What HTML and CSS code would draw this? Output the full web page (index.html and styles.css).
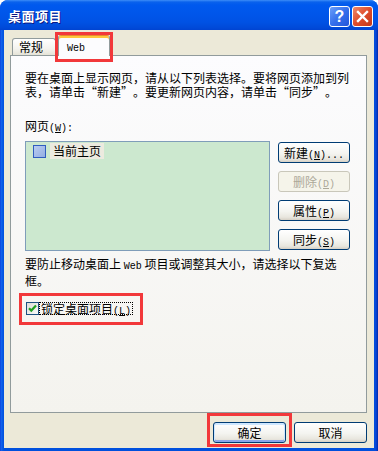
FILE: index.html
```html
<!DOCTYPE html>
<html lang="zh-CN">
<head>
<meta charset="utf-8">
<title>桌面项目</title>
<link rel="stylesheet" href="styles.css">
</head>
<body>
<div class="window">
  <div class="titlebar">
    <span class="title">桌面项目</span>
    <div class="tb-buttons">
      <span class="tb-btn help">?</span>
      <span class="tb-btn close"><svg width="19" height="19" viewBox="0 0 19 19"><path d="M5 5 L14 14 M14 5 L5 14" stroke="#fff" stroke-width="2.4" stroke-linecap="square"/></svg></span>
    </div>
  </div>
  <div class="client">
    <div class="tabs">
      <div class="tab">常规</div>
      <div class="tab active mark mark-tab"><span class="en">Web</span></div>
    </div>
    <div class="pane">
      <p class="intro">要在桌面上显示网页，请从以下列表选择。要将网页添加到列<br>表，请单击<span class="q qo">“</span>新建<span class="q qc">”</span>。要更新网页内容，请单击<span class="q qo">“</span>同步<span class="q qc">”</span>。</p>
      <div class="label">网页<span class="en">(<u>W</u>):</span></div>
      <div class="list-row">
        <div class="list">
          <div class="item"><span class="item-icon"></span><span class="item-text">当前主页</span></div>
        </div>
        <div class="side">
          <button class="btn">新建<span class="en">(<u>N</u>)...</span></button>
          <button class="btn disabled">删除<span class="en">(<u>D</u>)</span></button>
          <button class="btn">属性<span class="en">(<u>P</u>)</span></button>
          <button class="btn">同步<span class="en">(<u>S</u>)</span></button>
        </div>
      </div>
      <p class="note">要防止移动桌面上 <span class="en">Web</span> 项目或调整其大小，请选择以下复选<br>框。</p>
      <div class="check mark mark-check">
        <span class="box"><svg width="11" height="11" viewBox="0 0 11 11"><path d="M2 5.2 L4.3 7.6 L9 2.6" fill="none" stroke="#21A121" stroke-width="2.2"/></svg></span>
        <span class="check-label">锁定桌面项目<span class="en">(<u>L</u>)</span></span>
      </div>
    </div>
    <div class="footer">
      <button class="btn wide default mark mark-ok">确定</button>
      <button class="btn wide">取消</button>
    </div>
  </div>
</div>
</body>
</html>
```
FILE: styles.css
```css
* { box-sizing: border-box; }
html, body { margin: 0; padding: 0; }
body {
  width: 378px;
  height: 451px;
  overflow: hidden;
  font-family: "Noto Sans CJK SC", sans-serif;
  font-size: 12px;
  color: #000;
  background: #fff;
}
.en { font-family: "Liberation Mono", monospace; font-size: 10px; }
.q { display: inline-block; width: 12px; line-height: 9px; }
.qo { text-align: right; }
.qc { text-align: left; }

.window {
  width: 378px;
  height: 451px;
  display: flex;
  flex-direction: column;
  border-radius: 8px 8px 0 0;
  background: linear-gradient(to right, #0831D9 0, #1667EC 1px, #0A5BE8 2px, #0050DD 4px, #0050DD 374px, #0845D8 376px, #0029A8 378px);
}
.titlebar {
  height: 30px;
  flex: none;
  display: flex;
  align-items: center;
  padding: 0 5px 0 8px;
  border-radius: 8px 8px 0 0;
  background: linear-gradient(#3D8DF7 0, #0A62EC 2px, #0059EE 5px, #0056EA 14px, #0052E4 22px, #0049D8 28px, #0044D1 30px);
}
.title {
  flex: 1;
  color: #fff;
  font-weight: bold;
  font-size: 13px;
  letter-spacing: 0.5px;
  line-height: 16px;
  margin-top: 1px;
  text-shadow: 1px 1px #0A1883;
}
.tb-buttons { display: flex; gap: 2px; margin-top: 3px; }
.tb-btn {
  width: 21px;
  height: 21px;
  border: 1px solid #fff;
  border-radius: 3px;
  display: flex;
  align-items: center;
  justify-content: center;
}
.help {
  background: linear-gradient(135deg, #6A9EF9, #3670EC 50%, #2355DA);
  color: #fff;
  font-family: "Liberation Sans", sans-serif;
  font-weight: bold;
  font-size: 16px;
  line-height: 19px;
}
.close {
  background: linear-gradient(135deg, #F0896A, #DE4C2B 50%, #C2381A);
}

.client {
  flex: 1;
  margin: 0 4px 3px 4px;
  background: #ECE9D8;
  padding: 0 7px 0 6px;
  display: flex;
  flex-direction: column;
}
.tabs {
  height: 25px;
  flex: none;
  display: flex;
  align-items: flex-end;
  padding-left: 2px;
  position: relative;
  z-index: 2;
}
.tab {
  width: 44px;
  height: 17px;
  padding-left: 6px;
  line-height: 16px;
  border: 1px solid #919B9C;
  border-bottom: none;
  border-radius: 3px 3px 0 0;
  background: linear-gradient(#FFFFFF, #F4F3EE 60%, #E5E3D8);
  position: relative;
}
.tab.active {
  width: 52px;
  height: 21px;
  margin-left: 2px;
  margin-bottom: -1px;
  padding: 3px 0 0 8px;
  line-height: 14px;
  border-top: 1px solid #E68B2C;
  background: #FCFCFE;
  box-shadow: inset 0 2px 0 #FFC73C;
}
.pane {
  height: 358px;
  flex: none;
  border: 1px solid #919B9C;
  background: linear-gradient(#FCFCFE, #F4F3EE);
  padding: 15px 14px 0 14px;
  position: relative;
  z-index: 1;
}
.intro { margin: 0; line-height: 14px; }
.label { margin-top: 20px; line-height: 13px; }
.list-row { display: flex; gap: 8px; margin-top: 6px; }
.list {
  width: 245px;
  height: 110px;
  border: 1px solid #7F9DB9;
  background: #CCE8CF;
  padding: 1px 0 0 7px;
}
.item { display: flex; align-items: center; gap: 4px; height: 16px; }
.item-icon {
  width: 13px;
  height: 13px;
  border: 1px solid #2F5CC0;
  background: linear-gradient(135deg, #B9CCF0, #93ADE2);
}
.item-text {
  background: #ECEADF;
  padding: 0 3px;
  line-height: 16px;
}
.side { display: flex; flex-direction: column; gap: 8px; padding-top: 1px; }
.btn {
  width: 72px;
  height: 21px;
  padding: 0;
  font: inherit;
  color: #000;
  line-height: 19px;
  border: 1px solid #003C74;
  border-radius: 3px;
  background: linear-gradient(#FFFFFF, #F4F4F0 55%, #E8E6DE 85%, #D6D0C5);
  text-align: center;
  position: relative;
}
.btn.disabled {
  border-color: #C9C7BA;
  background: #F5F4EA;
  color: #ACA899;
}
.btn.wide { width: 73px; }
.btn.default {
  box-shadow: inset 0 1px 0 1px #CEE7FF, inset 0 -1px 0 1px #8BA6EC;
}
.note { margin: 6px 0 0; line-height: 14px; }
.check {
  margin-top: 14px;
  padding-left: 1px;
  display: flex;
  align-items: center;
  width: max-content;
  height: 13px;
  position: relative;
}
.box {
  width: 13px;
  height: 13px;
  border: 1px solid #1C5180;
  background: linear-gradient(135deg, #DCDCD7, #FBFBF9);
  display: flex;
  align-items: center;
  justify-content: center;
}
.check-label {
  border: 1px dotted #000;
  padding: 0 1px;
  line-height: 11px;
  height: 13px;
}
.footer {
  display: flex;
  justify-content: flex-end;
  gap: 8px;
  margin-top: 9px;
}

.mark::after {
  content: "";
  position: absolute;
  border: 3px solid #F2383A;
  pointer-events: none;
  z-index: 5;
}
.mark-tab::after { left: -4px; right: -4px; top: -4px; bottom: -6px; }
.mark-check::after { left: -6px; right: -10px; top: -9px; bottom: -10px; }
.mark-ok::after { left: -7px; right: -7px; top: -10px; bottom: -5px; }
```
